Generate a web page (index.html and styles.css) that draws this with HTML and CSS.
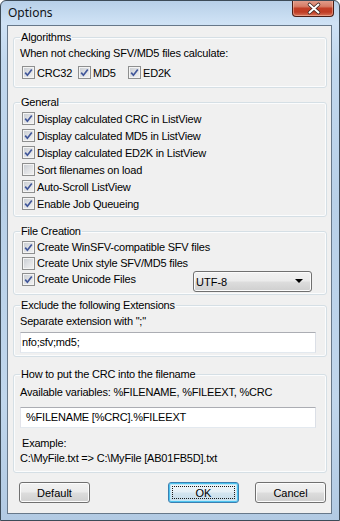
FILE: index.html
```html
<!DOCTYPE html>
<html>
<head>
<meta charset="utf-8">
<title>Options</title>
<link rel="stylesheet" href="styles.css">
</head>
<body>
<div class="window">
  <div class="titlebar">
    <span class="title">Options</span>
    <div class="close">
      <svg width="42" height="17" viewBox="0 0 42 17">
        <path d="M16.5 4.5 L25.5 12.5 M25.5 4.5 L16.5 12.5" stroke="#3b2420" stroke-width="3.6" stroke-linecap="round" fill="none"/>
        <path d="M16.5 4.5 L25.5 12.5 M25.5 4.5 L16.5 12.5" stroke="#ffffff" stroke-width="2" stroke-linecap="round" fill="none"/>
      </svg>
    </div>
  </div>
  <div class="client">
    <fieldset class="group g-algo">
      <legend>Algorithms</legend>
      <div class="line">When not checking SFV/MD5 files calculate:</div>
      <div class="algo-row">
        <label class="cb w-crc"><span class="box"><svg width="11" height="11" viewBox="0 0 11 11"><path d="M2.2 5.6 L4.4 8.2 L8.8 2.4" stroke="#41579a" stroke-width="1.7" fill="none"/></svg></span>CRC32</label>
        <label class="cb w-md5"><span class="box"><svg width="11" height="11" viewBox="0 0 11 11"><path d="M2.2 5.6 L4.4 8.2 L8.8 2.4" stroke="#41579a" stroke-width="1.7" fill="none"/></svg></span>MD5</label>
        <label class="cb"><span class="box"><svg width="11" height="11" viewBox="0 0 11 11"><path d="M2.2 5.6 L4.4 8.2 L8.8 2.4" stroke="#41579a" stroke-width="1.7" fill="none"/></svg></span>ED2K</label>
      </div>
    </fieldset>

    <fieldset class="group g-general">
      <legend>General</legend>
      <label class="cb row17"><span class="box"><svg width="11" height="11" viewBox="0 0 11 11"><path d="M2.2 5.6 L4.4 8.2 L8.8 2.4" stroke="#41579a" stroke-width="1.7" fill="none"/></svg></span>Display calculated CRC in ListView</label>
      <label class="cb row17"><span class="box"><svg width="11" height="11" viewBox="0 0 11 11"><path d="M2.2 5.6 L4.4 8.2 L8.8 2.4" stroke="#41579a" stroke-width="1.7" fill="none"/></svg></span>Display calculated MD5 in ListView</label>
      <label class="cb row17"><span class="box"><svg width="11" height="11" viewBox="0 0 11 11"><path d="M2.2 5.6 L4.4 8.2 L8.8 2.4" stroke="#41579a" stroke-width="1.7" fill="none"/></svg></span>Display calculated ED2K in ListView</label>
      <label class="cb row17"><span class="box"></span>Sort filenames on load</label>
      <label class="cb row17"><span class="box"><svg width="11" height="11" viewBox="0 0 11 11"><path d="M2.2 5.6 L4.4 8.2 L8.8 2.4" stroke="#41579a" stroke-width="1.7" fill="none"/></svg></span>Auto-Scroll ListView</label>
      <label class="cb row17"><span class="box"><svg width="11" height="11" viewBox="0 0 11 11"><path d="M2.2 5.6 L4.4 8.2 L8.8 2.4" stroke="#41579a" stroke-width="1.7" fill="none"/></svg></span>Enable Job Queueing</label>
    </fieldset>

    <fieldset class="group g-file">
      <legend>File Creation</legend>
      <label class="cb row16"><span class="box"><svg width="11" height="11" viewBox="0 0 11 11"><path d="M2.2 5.6 L4.4 8.2 L8.8 2.4" stroke="#41579a" stroke-width="1.7" fill="none"/></svg></span>Create WinSFV-compatible SFV files</label>
      <label class="cb row16"><span class="box"></span>Create Unix style SFV/MD5 files</label>
      <div class="combo-row">
        <label class="cb row16"><span class="box"><svg width="11" height="11" viewBox="0 0 11 11"><path d="M2.2 5.6 L4.4 8.2 L8.8 2.4" stroke="#41579a" stroke-width="1.7" fill="none"/></svg></span>Create Unicode Files</label>
        <div class="combo">
          <span class="combo-text">UTF-8</span>
          <svg class="combo-arrow" width="9" height="5" viewBox="0 0 9 5"><path d="M0 0 H8 L4 4 Z" fill="#000"/></svg>
        </div>
      </div>
    </fieldset>

    <fieldset class="group g-exclude">
      <legend>Exclude the following Extensions</legend>
      <div class="line">Separate extension with ";"</div>
      <div class="edit edit-ext">nfo;sfv;md5;</div>
    </fieldset>

    <fieldset class="group g-crc">
      <legend>How to put the CRC into the filename</legend>
      <div class="line">Available variables: %FILENAME, %FILEEXT, %CRC</div>
      <div class="edit edit-pattern">%FILENAME [%CRC].%FILEEXT</div>
      <div class="line ex1">Example:</div>
      <div class="line ex2">C:\MyFile.txt =&gt; C:\MyFile [AB01FB5D].txt</div>
    </fieldset>

    <div class="buttons">
      <div class="btn btn-default">Default</div>
      <div class="spacer"></div>
      <div class="btn btn-ok"><span class="focus">OK</span></div>
      <div class="btn btn-cancel">Cancel</div>
    </div>
  </div>
</div>
</body>
</html>
```

FILE: styles.css
```css
* { box-sizing: border-box; }

html, body {
  margin: 0;
  padding: 0;
  width: 340px;
  height: 521px;
  overflow: hidden;
  background: #ffffff;
}

body {
  font-family: "Liberation Sans", Arial, sans-serif;
  font-size: 11px;
  letter-spacing: -0.2px;
  color: #000;
}

.window {
  width: 340px;
  height: 521px;
  border: 1px solid #3d4b58;
  border-radius: 6px 6px 0 0;
  background: linear-gradient(to bottom, #b7cfe8 0px, #c2d8ee 10px, #cfe2f5 22px, #c2d8ee 60px, #b8d0e8 200px, #c0d6ec 400px, #b2cae3 521px);
  display: flex;
  flex-direction: column;
  overflow: hidden;
}

.titlebar {
  height: 24px;
  display: flex;
  justify-content: space-between;
  align-items: flex-start;
  flex: none;
}

.title {
  font-family: "Noto Sans", "Open Sans", sans-serif;
  font-size: 12px;
  letter-spacing: 0;
  line-height: 24px;
  padding-left: 7px;
  color: #101418;
}

.close {
  width: 42px;
  height: 17px;
  margin-top: -1px;
  margin-right: 5px;
  border: 1px solid #4a1d16;
  border-top: none;
  border-radius: 0 0 4px 4px;
  background: linear-gradient(to bottom, #e3a190 0%, #d67c66 40%, #c23f27 52%, #bf3c24 75%, #d6735a 100%);
  box-shadow: inset 0 0 0 1px rgba(255, 210, 190, 0.45);
}

.close svg { display: block; }

.client {
  margin: 0 7px 0 6px;
  border: 1px solid #67788a;
  background: #f0f0f0;
  padding: 5px 4px 10px 5px;
  flex: none;
}

.group {
  margin: 0;
  min-width: 0;
  border: 1px solid #d5dfe5;
  border-radius: 3px;
  padding: 0 10px 0 6px;
  box-shadow: inset 0 0 0 1px #fbfcfd;
}

.group legend {
  padding: 0 1px;
  line-height: 13px;
  height: 13px;
}

.line {
  line-height: 13px;
  height: 13px;
  white-space: nowrap;
}

.g-algo { padding-top: 3px; padding-bottom: 6px; }
.g-general { margin-top: 8px; padding-top: 1px; padding-bottom: 4px; }
.g-file { margin-top: 8px; padding-top: 1px; padding-bottom: 2px; }
.g-exclude { margin-top: 4px; padding-top: 3px; padding-bottom: 3px; }
.g-crc { margin-top: 11px; padding-top: 5px; padding-bottom: 7px; }

.algo-row {
  display: flex;
  margin-top: 4px;
}

.cb {
  display: flex;
  align-items: center;
  height: 17px;
  margin-left: 2px;
  white-space: nowrap;
}

.row17 { height: 17px; }
.row16 { height: 16px; }

.w-crc { width: 54px; }
.w-md5 { width: 48px; }

.box {
  width: 13px;
  height: 13px;
  flex: none;
  margin-right: 2px;
  border: 1px solid #8e8f8f;
  background: linear-gradient(135deg, #c6cad0 0%, #dfe1e4 50%, #f3f3f3 100%);
  box-shadow: inset 0 0 0 1px #f4f4f4;
  display: flex;
  align-items: center;
  justify-content: center;
}

.box svg { display: block; }

.combo-row {
  display: flex;
  align-items: flex-start;
  justify-content: space-between;
}

.combo {
  width: 119px;
  height: 21px;
  margin-right: 4px;
  border: 1px solid #707070;
  border-radius: 3px;
  background: linear-gradient(to bottom, #f2f2f2 0%, #ebebeb 48%, #dddddd 52%, #cfcfcf 100%);
  box-shadow: inset 0 0 0 1px #fbfbfb;
  display: flex;
  align-items: center;
  justify-content: space-between;
  padding: 0 7px 0 2px;
}

.combo-text {
  font-family: "Liberation Sans", Arial, sans-serif;
  font-size: 11px;
  letter-spacing: 0;
}

.combo-arrow { display: block; }

.edit {
  height: 21px;
  margin-top: 4px;
  background: #fff;
  border: 1px solid #e3e9ef;
  border-top-color: #abadb3;
  border-left-color: #e2e3ea;
  border-right-color: #dbdfe6;
  line-height: 19px;
  white-space: nowrap;
}

.edit-ext { padding-left: 1px; }
.edit-pattern { margin-top: 8px; padding-left: 5px; }

.ex1 { margin-top: 9px; padding-left: 2px; }
.ex2 { margin-top: 2px; }

.buttons {
  display: flex;
  margin-top: 9px;
  height: 21px;
}

.spacer { flex: 1; }

.btn {
  width: 71px;
  height: 21px;
  border: 1px solid #707070;
  border-radius: 3px;
  background: linear-gradient(to bottom, #f2f2f2 0%, #ebebeb 48%, #dddddd 52%, #cfcfcf 100%);
  box-shadow: inset 0 0 0 1px #fcfcfc;
  display: flex;
  align-items: center;
  justify-content: center;
  font-size: 11px;
  letter-spacing: 0;
}

.btn-default { margin-left: 6px; }

.btn-ok {
  border-color: #3c7fb1;
  background: linear-gradient(to bottom, #eef6fb 0%, #e4eff6 48%, #d3e5f0 52%, #c6dcea 100%);
  box-shadow: inset 0 0 0 1px #4cc3ef, inset 0 0 0 2px #bfe6f7;
  padding: 3px;
}

.focus {
  flex: 1;
  align-self: stretch;
  display: flex;
  align-items: center;
  justify-content: center;
  border: 1px dotted #1a1a1a;
}

.btn-cancel { margin-left: 16px; margin-right: 1px; }
```
